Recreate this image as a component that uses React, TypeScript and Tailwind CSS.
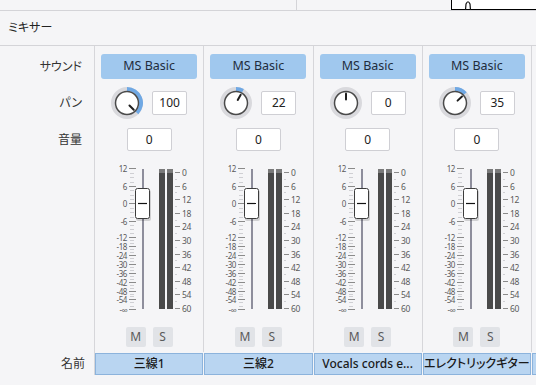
const CHANNELS = [
  { name: '三線1', pan: 100 },
  { name: '三線2', pan: 22 },
  { name: 'Vocals cords e...', pan: 0 },
  { name: 'エレクトリックギター', pan: 35 },
  { name: 'ベース', pan: 0 },
];

// left (fader) scale: label, y inside the fader svg
const LEFT: [string, number][] = [
  ['12', 8], ['6', 26], ['0', 43], ['-6', 61], ['-12', 77], ['-18', 86], ['-24', 95],
  ['-30', 104], ['-36', 113], ['-42', 122], ['-48', 131], ['-54', 139], ['-∞', 149],
];

const RIGHT = ['0', '6', '12', '18', '24', '30', '36', '42', '48', '54', '60'];

function Knob({ value }: { value: number }) {
  const deg = value * 1.35;
  const a = (deg * Math.PI) / 180;
  const pt = (r: number) => [16 + r * Math.sin(a), 16 - r * Math.cos(a)];
  const [ex, ey] = pt(14);
  const [x1, y1] = pt(3.5);
  const [x2, y2] = pt(9.5);
  return (
    <svg width="32" height="32" viewBox="0 0 32 32" className="block shrink-0">
      <circle cx="16" cy="16" r="14" fill="none" stroke="#d9d9dd" strokeWidth="4" />
      {value !== 0 && (
        <path
          d={`M16 2 A14 14 0 ${Math.abs(deg) > 180 ? 1 : 0} ${value > 0 ? 1 : 0} ${ex} ${ey}`}
          fill="none"
          stroke="#6fa8e4"
          strokeWidth="4"
        />
      )}
      <circle cx="16" cy="16" r="11.5" fill="white" stroke="#4a4a4a" strokeWidth="1.5" />
      <line x1={x1} y1={y1} x2={x2} y2={y2} stroke="#1e1e1e" strokeWidth="2" strokeLinecap="round" />
    </svg>
  );
}

function Fader() {
  const minors: number[] = [];
  for (let i = 0; i < LEFT.length - 1; i++) {
    const y0 = LEFT[i][1];
    const y1 = LEFT[i + 1][1];
    const n = y1 - y0 > 12 ? 3 : 2;
    for (let k = 1; k <= n; k++) minors.push(Math.round(y0 + ((y1 - y0) * k) / (n + 1)));
  }
  return (
    <svg width="109" height="155" className="block" fontFamily="'Noto Sans', sans-serif">
      {minors.map((y, i) => (
        <line key={i} x1="35" x2="39" y1={y + 0.5} y2={y + 0.5} stroke="#cfcfd3" />
      ))}
      {LEFT.map(([t, y]) => (
        <g key={t}>
          <text x="32" y={y} textAnchor="end" dominantBaseline="central" fontSize="8" letterSpacing="-0.4" fill="#5a5a5a">
            {t}
          </text>
          <line x1="34" x2="41" y1={y + 0.5} y2={y + 0.5} stroke="#8a8a8a" />
        </g>
      ))}
      <rect x="47" y="9" width="2" height="140" fill="#8e8e9c" />
      <rect x="41" y="30" width="15" height="31" rx="2" fill="rgba(0,0,0,0.15)" />
      <rect x="40.5" y="28.5" width="14" height="30" rx="2" fill="white" stroke="#3c3c3c" />
      <line x1="43" x2="52" y1="43.5" y2="43.5" stroke="#111" strokeWidth="1.2" />

      <rect x="64" y="9" width="6" height="140" fill="#4a4a4a" />
      <rect x="64" y="9" width="6" height="4" fill="#7a7a7a" />
      <rect x="72" y="9" width="6" height="140" fill="#4a4a4a" />
      <rect x="72" y="9" width="6" height="4" fill="#7a7a7a" />

      {RIGHT.map((t, i) => {
        const y = Math.round(12 + i * 13.6);
        const m = Math.round(12 + (i + 0.5) * 13.6);
        return (
          <g key={t}>
            <line x1="80" x2="85" y1={y + 0.5} y2={y + 0.5} stroke="#8a8a8a" />
            {i < RIGHT.length - 1 && <line x1="80" x2="82" y1={m + 0.5} y2={m + 0.5} stroke="#cfcfd3" />}
            <text x="87" y={y} dominantBaseline="central" fontSize="8.5" letterSpacing="-0.4" fill="#5a5a5a">
              {t}
            </text>
          </g>
        );
      })}
    </svg>
  );
}

function Channel({ pan }: { pan: number }) {
  return (
    <div className="w-[109.25px] shrink-0 border-r border-[#d6d6da] pt-[8px] flex flex-col items-center">
      <div className="w-[96px] h-[25px] rounded-[3px] bg-[#a0c8ee] flex items-center justify-center text-[12.5px] text-[#1f2d3d]">
        MS Basic
      </div>
      <div className="mt-[8px] h-[32px] flex items-center gap-[9px]">
        <Knob value={pan} />
        <div className="w-[35px] h-[24px] bg-white border border-[#cfcfd4] rounded-[2px] flex items-center justify-center text-[12px] text-[#222]">
          {pan}
        </div>
      </div>
      <div className="mt-[9px] w-[45px] h-[23px] bg-white border border-[#cfcfd4] rounded-[2px] flex items-center justify-center text-[12px] text-[#222]">
        0
      </div>
      <div className="mt-[9px] self-stretch">
        <Fader />
      </div>
      <div className="mt-[12px] h-[20px] flex gap-[7px] mb-[5px]">
        <div className="w-[20px] h-[20px] rounded-[2px] bg-[#e1e3e7] flex items-center justify-center text-[12px] text-[#5a5a5a]">M</div>
        <div className="w-[20px] h-[20px] rounded-[2px] bg-[#e1e3e7] flex items-center justify-center text-[12px] text-[#5a5a5a]">S</div>
      </div>
    </div>
  );
}

export default function App() {
  return (
    <div className="w-[536px] h-[385px] overflow-hidden bg-[#f5f5f7] font-['Noto_Sans','Noto_Sans_CJK_JP',sans-serif] [font-feature-settings:'palt'] text-[#333]">
      {/* fragment of the panel above */}
      <div className="h-[11px] flex border-b border-[#d4d4d8]">
        <div className="w-[297px] border-r border-[#d4d4d8]" />
        <div className="w-[154px]" />
        <div className="flex-1 bg-white border-l border-b border-black relative">
          <svg width="20" height="10" className="absolute left-[10px] top-0">
            <path d="M3.5 10 L4 4 Q6 -0.5 8 4 L8.5 10" fill="none" stroke="#111" strokeWidth="1.2" />
          </svg>
        </div>
      </div>

      <div className="h-[35px] flex items-center pl-[8px] border-b border-[#d4d4d8] text-[12px] text-[#222]">
        ミキサー
      </div>

      <div className="flex h-[306px]">
        <div className="w-[95px] shrink-0 border-r border-[#d6d6da] pt-[8px] pr-[12px] flex flex-col items-end text-[12px] text-[#333]">
          <div className="h-[25px] flex items-center">サウンド</div>
          <div className="mt-[8px] h-[32px] flex items-center">パン</div>
          <div className="mt-[9px] h-[23px] flex items-center">音量</div>
        </div>
        {CHANNELS.map((c, i) => (
          <Channel key={i} pan={c.pan} />
        ))}
      </div>

      <div className="flex h-[23px]">
        <div className="w-[95px] shrink-0 border-r border-[#d6d6da] pr-[9px] flex items-center justify-end text-[12px] text-[#333]">
          名前
        </div>
        {CHANNELS.map((c, i) => (
          <div key={i} className="w-[109.25px] shrink-0 pt-px pr-px">
            <div className="h-[22px] bg-[#b9d5f1] border border-[#8cb3dc] flex items-center justify-center text-[12px] font-medium text-[#1a1a1a] whitespace-nowrap overflow-hidden">
              {c.name}
            </div>
          </div>
        ))}
      </div>
    </div>
  );
}
